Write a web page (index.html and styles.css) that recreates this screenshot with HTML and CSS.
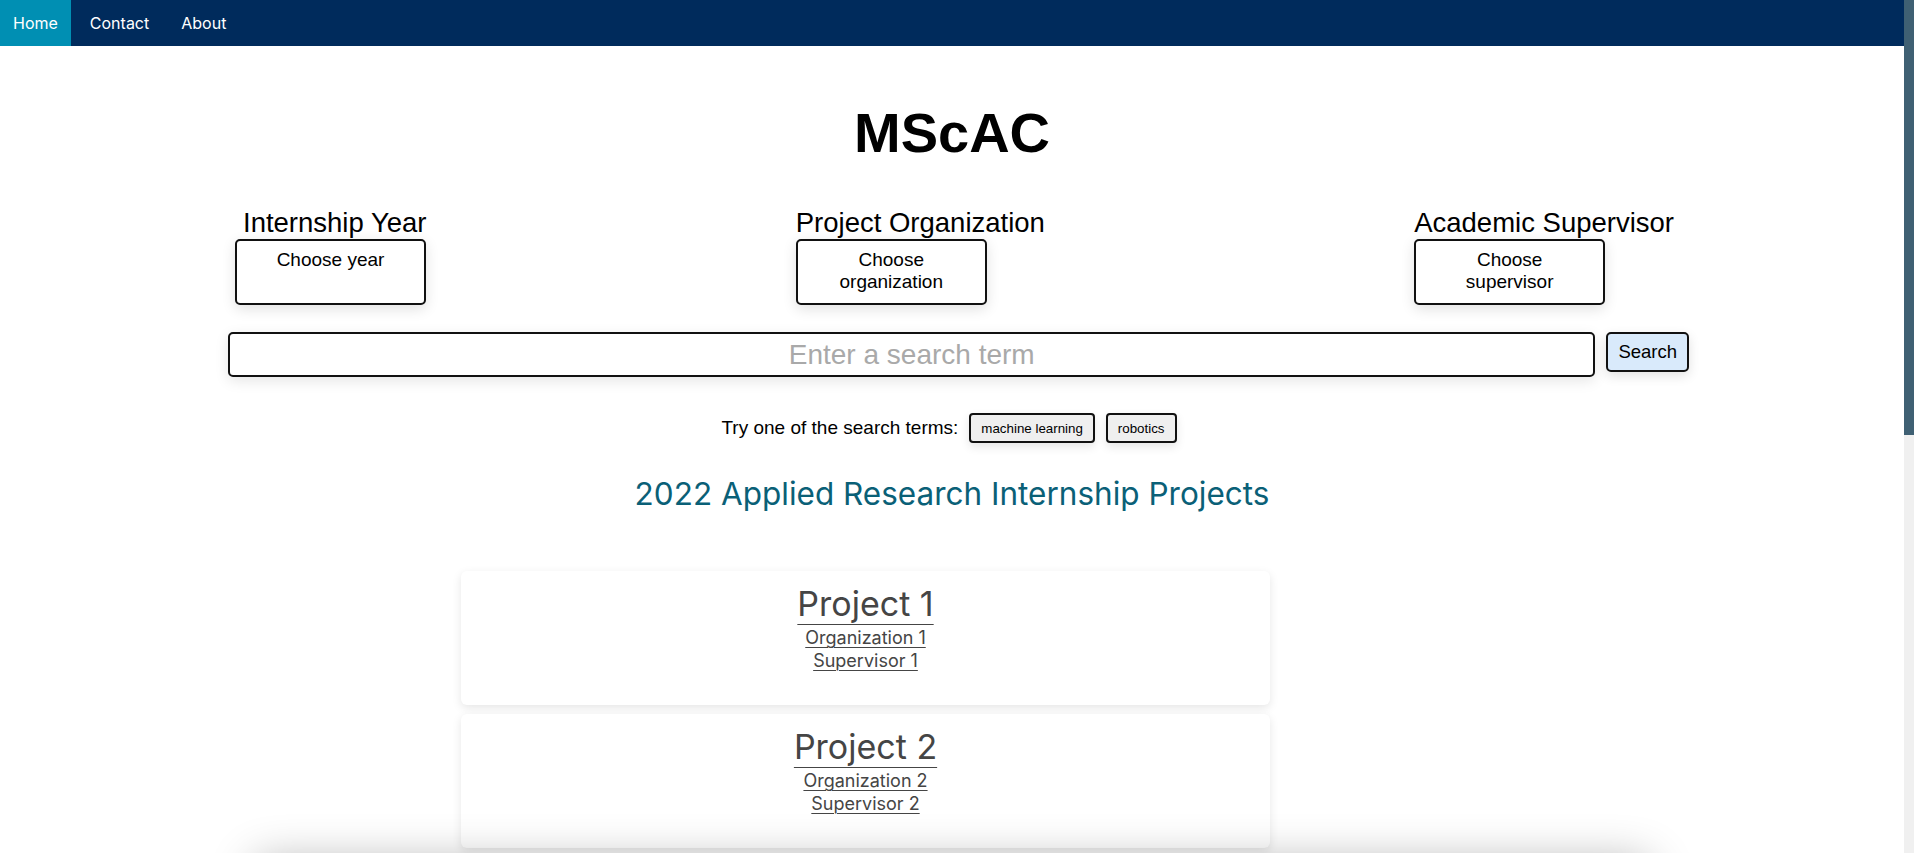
FILE: index.html
```html
<!DOCTYPE html>
<html lang="en">
<head>
<meta charset="utf-8">
<title>MScAC</title>
<link rel="stylesheet" href="styles.css">
</head>
<body>
<div class="window">
  <div class="viewport">
    <nav class="topnav">
      <a class="navlink navlink-active" href="#">Home</a>
      <a class="navlink" href="#">Contact</a>
      <a class="navlink" href="#">About</a>
    </nav>
    <main class="main">
      <h1 class="title">MScAC</h1>
      <div class="filters">
        <div class="filter">
          <h2 class="filter-label filter-label-indent">Internship Year</h2>
          <button class="filter-btn" type="button">Choose year</button>
        </div>
        <div class="filter">
          <h2 class="filter-label">Project Organization</h2>
          <button class="filter-btn" type="button">Choose organization</button>
        </div>
        <div class="filter">
          <h2 class="filter-label">Academic Supervisor</h2>
          <button class="filter-btn" type="button">Choose supervisor</button>
        </div>
      </div>
      <form class="search">
        <input class="search-input" type="text" placeholder="Enter a search term">
        <button class="search-btn" type="button">Search</button>
      </form>
      <div class="suggest">
        <span class="suggest-label">Try one of the search terms:</span>
        <button class="chip" type="button">machine learning</button>
        <button class="chip" type="button">robotics</button>
      </div>
      <h2 class="subtitle">2022 Applied Research Internship Projects</h2>
      <div class="projects">
        <article class="card">
          <div class="card-title"><a class="card-link" href="#">Project 1</a></div>
          <div class="card-meta"><a class="card-link" href="#">Organization 1</a></div>
          <div class="card-meta"><a class="card-link" href="#">Supervisor 1</a></div>
        </article>
        <article class="card">
          <div class="card-title"><a class="card-link" href="#">Project 2</a></div>
          <div class="card-meta"><a class="card-link" href="#">Organization 2</a></div>
          <div class="card-meta"><a class="card-link" href="#">Supervisor 2</a></div>
        </article>
      </div>
      <section class="more"></section>
    </main>
  </div>
  <div class="scrollbar"><div class="scroll-thumb"></div><div class="scroll-track"></div></div>
</div>
</body>
</html>
```

FILE: styles.css
```css
* { box-sizing: border-box; }

html, body {
  margin: 0;
  height: 100%;
}

body {
  overflow: hidden;
  background: #fff;
  color: #000;
  font-family: "Liberation Sans", Arial, sans-serif;
}

.window {
  display: flex;
  height: 100vh;
}

.viewport {
  flex: 1;
  min-width: 0;
  overflow: hidden;
}

.scrollbar {
  width: 10px;
  flex-shrink: 0;
  display: flex;
  flex-direction: column;
}

.scroll-thumb {
  height: 435px;
  background: #3f6073;
}

.scroll-track {
  flex: 1;
  background: #f0f0f0;
}

/* nav */
.topnav {
  display: flex;
  gap: 6px;
  height: 46px;
  background: #002b5c;
}

.navlink {
  display: flex;
  align-items: center;
  padding: 0 13px;
  color: #fff;
  font-family: Inter, "Noto Sans", sans-serif;
  font-size: 16px;
  text-decoration: none;
}

.navlink-active {
  background: #008fb3;
}

/* main */
.main {
  padding: 0 222px;
}

.title {
  margin: 54px 0 0;
  text-align: center;
  font-size: 56px;
  font-weight: 700;
  line-height: normal;
}

.filters {
  display: flex;
  justify-content: space-between;
  margin: 42px 8px 0 13px;
}

.filter-label {
  margin: 0;
  font-size: 27.5px;
  font-weight: 400;
  line-height: normal;
  white-space: nowrap;
}

.filter-label-indent {
  padding-left: 8px;
}

.filter-btn {
  display: flex;
  align-items: flex-start;
  justify-content: center;
  width: 191px;
  height: 66px;
  padding: 8px 18px;
  border: 2px solid #111;
  border-radius: 5px;
  background: #fff;
  color: #000;
  font-family: "Liberation Sans", Arial, sans-serif;
  font-size: 19px;
  line-height: normal;
  text-align: center;
  box-shadow: 0 4px 14px rgba(0, 0, 0, 0.12);
}

.search {
  display: flex;
  align-items: flex-start;
  gap: 11px;
  margin: 27px -7px 0 6px;
}

.search-input {
  flex: 1;
  min-width: 0;
  height: 45px;
  padding: 0 10px;
  border: 2px solid #111;
  border-radius: 5px;
  font-family: "Liberation Sans", Arial, sans-serif;
  font-size: 28px;
  text-align: center;
  box-shadow: 0 4px 14px rgba(0, 0, 0, 0.1);
  outline: none;
}

.search-input::placeholder {
  color: #a9a9a9;
}

.search-btn {
  height: 40px;
  padding: 0 10px;
  border: 2px solid #111;
  border-radius: 5px;
  background: #d9eafb;
  color: #000;
  font-family: "Liberation Sans", Arial, sans-serif;
  font-size: 18.5px;
  box-shadow: 0 4px 12px rgba(0, 0, 0, 0.12);
}

.suggest {
  display: flex;
  justify-content: center;
  align-items: center;
  gap: 11px;
  margin: 36px 6px 0 0;
}

.suggest-label {
  font-size: 19px;
}

.chip {
  height: 30px;
  padding: 0 10px;
  border: 2px solid #111;
  border-radius: 4px;
  background: #efefef;
  color: #000;
  font-family: "Liberation Sans", Arial, sans-serif;
  font-size: 13.333px;
  box-shadow: 0 4px 10px rgba(0, 0, 0, 0.1);
}

.subtitle {
  margin: 31px 0 0;
  text-align: center;
  font-family: Inter, "Noto Sans", sans-serif;
  font-size: 31.5px;
  font-weight: 400;
  line-height: normal;
  color: #0a6077;
}

.projects {
  width: 809px;
  margin: 58px 0 0 239px;
}

.card {
  height: 134px;
  margin-bottom: 9px;
  padding-top: 11px;
  background: #fff;
  border-radius: 6px;
  box-shadow: 0 3px 10px rgba(0, 0, 0, 0.1);
  text-align: center;
  font-family: Inter, "Noto Sans", sans-serif;
  color: #454545;
}

.card-link {
  color: #454545;
  text-decoration: underline;
  text-decoration-thickness: 1px;
}

.card-title {
  font-size: 34px;
  line-height: 44px;
}

.card-title .card-link {
  text-underline-offset: 8px;
}

.card-meta {
  font-size: 18px;
  line-height: 23px;
}

.card-meta .card-link {
  text-underline-offset: 3px;
}

.more {
  height: 600px;
  margin: 13px 33px 0 33px;
  background: #fff;
  border-radius: 8px;
  box-shadow: 0 0 45px rgba(0, 0, 0, 0.3);
}
```
